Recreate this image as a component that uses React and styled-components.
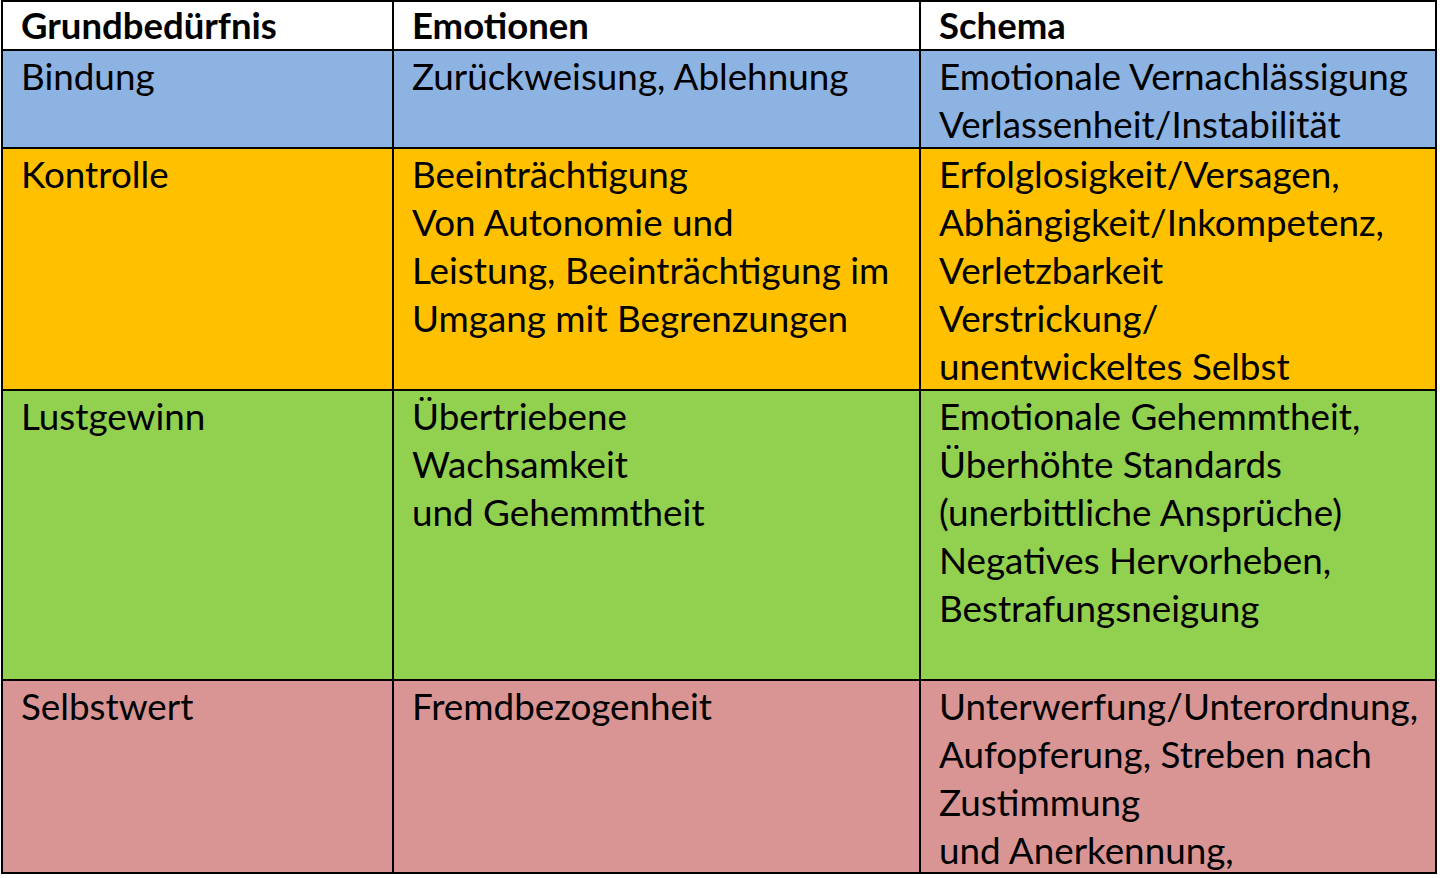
import React from "react";
import styled, { createGlobalStyle } from "styled-components";

const Global = createGlobalStyle`
  html, body { margin: 0; padding: 0; background: #ffffff; }
  body { font-family: "Lato", "Open Sans", sans-serif; color: #000; }
`;

const Page = styled.div`
  padding: 0 0 0 1px;
`;

const Grid = styled.div`
  display: grid;
  grid-template-columns: 391px 527px 516px;
  width: 1436px;
  border-left: 2px solid #000;
  border-top: 2px solid #000;
  box-sizing: border-box;
`;

const Cell = styled.div`
  background: ${(p) => p.$bg};
  border-right: 2px solid #000;
  border-bottom: 2px solid #000;
  height: ${(p) => p.$h}px;
  padding: 1px 0 0 18px;
  box-sizing: content-box;
  overflow: hidden;
  font-size: ${(p) => (p.$head ? "36.5px" : "36.8px")};
  font-weight: ${(p) => (p.$head ? 700 : 400)};
  line-height: ${(p) => (p.$head ? "44px" : "48px")};
`;

const Line = styled.div`
  white-space: nowrap;
`;

const header = ["Grundbedürfnis", "Emotionen", "Schema"];

const rows = [
  {
    bg: "#8db3e2",
    h: 95,
    cells: [
      ["Bindung"],
      ["Zurückweisung, Ablehnung"],
      ["Emotionale Vernachlässigung", "Verlassenheit/Instabilität"],
    ],
  },
  {
    bg: "#ffc000",
    h: 239,
    cells: [
      ["Kontrolle"],
      [
        "Beeinträchtigung",
        "Von Autonomie und",
        "Leistung, Beeinträchtigung im",
        "Umgang mit Begrenzungen",
      ],
      [
        "Erfolglosigkeit/Versagen,",
        "Abhängigkeit/Inkompetenz,",
        "Verletzbarkeit",
        "Verstrickung/",
        "unentwickeltes Selbst",
      ],
    ],
  },
  {
    bg: "#92d050",
    h: 287,
    cells: [
      ["Lustgewinn"],
      ["Übertriebene", "Wachsamkeit", "und Gehemmtheit"],
      [
        "Emotionale Gehemmtheit,",
        "Überhöhte Standards",
        "(unerbittliche Ansprüche)",
        "Negatives Hervorheben,",
        "Bestrafungsneigung",
      ],
    ],
  },
  {
    bg: "#d99594",
    h: 190,
    cells: [
      ["Selbstwert"],
      ["Fremdbezogenheit"],
      [
        "Unterwerfung/Unterordnung,",
        "Aufopferung, Streben nach",
        "Zustimmung",
        "und Anerkennung,",
      ],
    ],
  },
];

export default function App() {
  return (
    <>
      <Global />
      <Page>
        <Grid>
          {header.map((t) => (
            <Cell key={t} $bg="#ffffff" $h={46} $head>
              <Line>{t}</Line>
            </Cell>
          ))}
          {rows.map((r, i) =>
            r.cells.map((lines, j) => (
              <Cell key={`${i}-${j}`} $bg={r.bg} $h={r.h}>
                {lines.map((l) => (
                  <Line key={l}>{l}</Line>
                ))}
              </Cell>
            ))
          )}
        </Grid>
      </Page>
    </>
  );
}
